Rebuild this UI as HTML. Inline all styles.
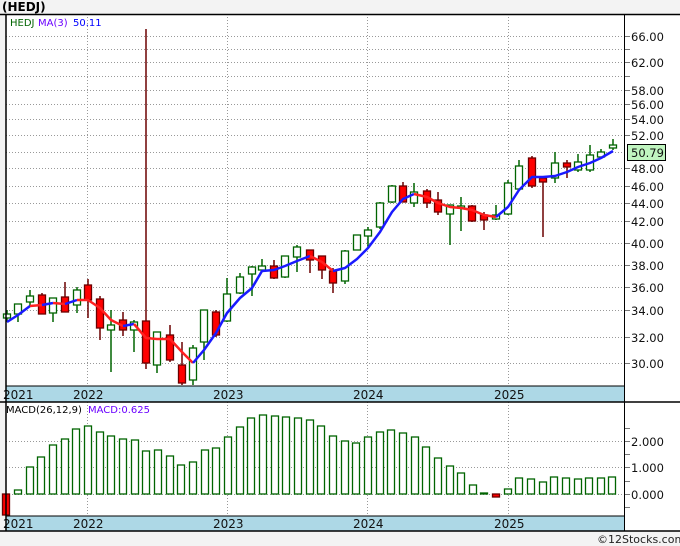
<!DOCTYPE html>
<html><head><meta charset="utf-8"><style>
html,body{margin:0;padding:0;background:#f3f3f3;}
svg{display:block;font-family:"DejaVu Sans","Liberation Sans",sans-serif;}
</style></head><body>
<svg width="680" height="546" viewBox="0 0 680 546" xmlns="http://www.w3.org/2000/svg">
<rect x="0" y="0" width="680" height="546" fill="#f3f3f3"/>
<text x="2" y="11" font-size="12" font-weight="bold" fill="#000">(HEDJ)</text>
<!-- panels -->
<rect x="6" y="14" width="674" height="517" fill="#fff"/>
<g stroke="#999" stroke-width="1" stroke-dasharray="1,2">
<line x1="6" x2="625" y1="36.5" y2="36.5"/><line x1="6" x2="625" y1="49.5" y2="49.5"/><line x1="6" x2="625" y1="62.5" y2="62.5"/><line x1="6" x2="625" y1="76.5" y2="76.5"/><line x1="6" x2="625" y1="90.5" y2="90.5"/><line x1="6" x2="625" y1="104.5" y2="104.5"/><line x1="6" x2="625" y1="119.5" y2="119.5"/><line x1="6" x2="625" y1="135.5" y2="135.5"/><line x1="6" x2="625" y1="152.5" y2="152.5"/><line x1="6" x2="625" y1="168.5" y2="168.5"/><line x1="6" x2="625" y1="186.5" y2="186.5"/><line x1="6" x2="625" y1="203.5" y2="203.5"/><line x1="6" x2="625" y1="221.5" y2="221.5"/><line x1="6" x2="625" y1="243.5" y2="243.5"/><line x1="6" x2="625" y1="265.5" y2="265.5"/><line x1="6" x2="625" y1="287.5" y2="287.5"/><line x1="6" x2="625" y1="310.5" y2="310.5"/><line x1="6" x2="625" y1="337.5" y2="337.5"/><line x1="6" x2="625" y1="363.5" y2="363.5"/>
<line x1="87.5" x2="87.5" y1="14" y2="386"/><line x1="227.5" x2="227.5" y1="14" y2="386"/><line x1="367.5" x2="367.5" y1="14" y2="386"/><line x1="508.5" x2="508.5" y1="14" y2="386"/>
<line x1="6" x2="625" y1="441.5" y2="441.5"/><line x1="6" x2="625" y1="467.5" y2="467.5"/><line x1="6" x2="625" y1="494.5" y2="494.5"/>
<line x1="87.5" x2="87.5" y1="402" y2="516"/><line x1="227.5" x2="227.5" y1="402" y2="516"/><line x1="367.5" x2="367.5" y1="402" y2="516"/><line x1="508.5" x2="508.5" y1="402" y2="516"/>
</g>
<text x="10" y="26" font-size="10" fill="#006400">HEDJ</text>
<text x="38" y="26" font-size="10" fill="#6a00ff">MA(3)</text>
<text x="73" y="26" font-size="10" fill="#0000ff">50.11</text>
<!-- wicks -->
<g stroke-width="1.5">
<g stroke="#006400">
<line x1="7" x2="7" y1="310" y2="322"/><line x1="18" x2="18" y1="304" y2="322"/><line x1="30" x2="30" y1="290" y2="306"/><line x1="53" x2="53" y1="298" y2="322"/><line x1="77" x2="77" y1="287" y2="313"/><line x1="111" x2="111" y1="310" y2="372"/><line x1="134" x2="134" y1="320" y2="352"/><line x1="157" x2="157" y1="332" y2="373"/><line x1="193" x2="193" y1="345" y2="385"/><line x1="204" x2="204" y1="310" y2="360"/><line x1="227" x2="227" y1="278" y2="322"/><line x1="240" x2="240" y1="273" y2="294"/><line x1="252" x2="252" y1="266" y2="296"/><line x1="262" x2="262" y1="259" y2="270"/><line x1="285" x2="285" y1="256" y2="278"/><line x1="297" x2="297" y1="245" y2="272"/><line x1="345" x2="345" y1="250" y2="284"/><line x1="357" x2="357" y1="235" y2="250"/><line x1="368" x2="368" y1="227" y2="248"/><line x1="380" x2="380" y1="202" y2="229"/><line x1="392" x2="392" y1="185" y2="203"/><line x1="414" x2="414" y1="183" y2="207"/><line x1="450" x2="450" y1="205" y2="245"/><line x1="461" x2="461" y1="197" y2="231"/><line x1="496" x2="496" y1="205" y2="220"/><line x1="508" x2="508" y1="180" y2="215"/><line x1="519" x2="519" y1="160" y2="190"/><line x1="555" x2="555" y1="152" y2="183"/><line x1="578" x2="578" y1="154" y2="172"/><line x1="590" x2="590" y1="145" y2="172"/><line x1="601" x2="601" y1="149" y2="158"/><line x1="613" x2="613" y1="139" y2="150"/>
</g>
<g stroke="#6b0000">
<line x1="42" x2="42" y1="293" y2="314"/><line x1="65" x2="65" y1="282" y2="312"/><line x1="88" x2="88" y1="279" y2="318"/><line x1="100" x2="100" y1="296" y2="340"/><line x1="123" x2="123" y1="312" y2="336"/><line x1="146" x2="146" y1="29" y2="369"/><line x1="170" x2="170" y1="325" y2="362"/><line x1="182" x2="182" y1="342" y2="385"/><line x1="216" x2="216" y1="310" y2="337"/><line x1="274" x2="274" y1="260" y2="279"/><line x1="310" x2="310" y1="250" y2="273"/><line x1="322" x2="322" y1="256" y2="279"/><line x1="333" x2="333" y1="268" y2="293"/><line x1="403" x2="403" y1="182" y2="202"/><line x1="427" x2="427" y1="189" y2="208"/><line x1="438" x2="438" y1="192" y2="215"/><line x1="472" x2="472" y1="205" y2="222"/><line x1="484" x2="484" y1="212" y2="230"/><line x1="532" x2="532" y1="156" y2="188"/><line x1="543" x2="543" y1="178" y2="237"/><line x1="567" x2="567" y1="160" y2="178"/>
</g>
</g>
<!-- bodies -->
<g fill="#fff" stroke="#006400" stroke-width="1.3">
<rect x="3.5" y="314" width="7" height="4"/><rect x="14.5" y="304" width="7" height="10"/><rect x="26.5" y="296" width="7" height="6"/><rect x="49.5" y="298" width="7" height="15"/><rect x="73.5" y="290" width="7" height="15"/><rect x="107.5" y="325" width="7" height="5"/><rect x="130.5" y="322" width="7" height="8"/><rect x="153.5" y="332" width="7" height="33"/><rect x="189.5" y="348" width="7" height="32"/><rect x="200.5" y="310" width="7" height="32"/><rect x="223.5" y="294" width="7" height="27"/><rect x="236.5" y="277" width="7" height="16"/><rect x="248.5" y="267" width="7" height="7"/><rect x="258.5" y="266" width="7" height="4"/><rect x="281.5" y="256" width="7" height="21"/><rect x="293.5" y="247" width="7" height="10"/><rect x="341.5" y="251" width="7" height="30"/><rect x="353.5" y="235" width="7" height="15"/><rect x="364.5" y="230" width="7" height="6"/><rect x="376.5" y="203" width="7" height="24"/><rect x="388.5" y="186" width="7" height="16"/><rect x="410.5" y="192" width="7" height="11"/><rect x="446.5" y="205" width="7" height="9"/><rect x="457.5" y="206" width="7" height="2"/><rect x="492.5" y="215" width="7" height="4"/><rect x="504.5" y="183" width="7" height="31"/><rect x="515.5" y="166" width="7" height="23"/><rect x="551.5" y="163" width="7" height="15"/><rect x="574.5" y="162" width="7" height="8"/><rect x="586.5" y="155" width="7" height="15"/><rect x="597.5" y="152" width="7" height="5"/><rect x="609.5" y="145" width="7" height="3"/>
</g>
<g fill="#ff0000" stroke="#6b0000" stroke-width="1.3">
<rect x="38.5" y="295" width="7" height="19"/><rect x="61.5" y="297" width="7" height="15"/><rect x="84.5" y="285" width="7" height="15"/><rect x="96.5" y="299" width="7" height="29"/><rect x="119.5" y="320" width="7" height="10"/><rect x="142.5" y="321" width="7" height="42"/><rect x="166.5" y="335" width="7" height="25"/><rect x="178.5" y="365" width="7" height="18"/><rect x="212.5" y="312" width="7" height="23"/><rect x="270.5" y="266" width="7" height="12"/><rect x="306.5" y="250" width="7" height="10"/><rect x="318.5" y="256" width="7" height="14"/><rect x="329.5" y="271" width="7" height="12"/><rect x="399.5" y="186" width="7" height="16"/><rect x="423.5" y="191" width="7" height="12"/><rect x="434.5" y="200" width="7" height="12"/><rect x="468.5" y="206" width="7" height="15"/><rect x="480.5" y="215" width="7" height="5"/><rect x="528.5" y="158" width="7" height="28"/><rect x="539.5" y="178" width="7" height="4"/><rect x="563.5" y="163" width="7" height="4"/>
</g>
<!-- MA line -->
<g fill="none" stroke-width="2.5" stroke-linejoin="round">
<polyline stroke="#1a1aff" points="7,322 18,315 30,306"/>
<polyline stroke="#ff2020" points="30,306 42,305"/>
<polyline stroke="#1a1aff" points="42,305 53,303"/>
<polyline stroke="#ff2020" points="53,303 65,304"/>
<polyline stroke="#1a1aff" points="65,304 77,300"/>
<polyline stroke="#ff2020" points="77,300 88,300 100,308 111,320 123,326"/>
<polyline stroke="#1a1aff" points="123,326 134,324"/>
<polyline stroke="#ff2020" points="134,324 146,338 157,339 170,339 182,352 193,363"/>
<polyline stroke="#1a1aff" points="193,363 204,350 216,333 227,313 240,298 252,288 262,271 274,270 285,266 297,261 310,256"/>
<polyline stroke="#ff2020" points="310,256 322,262 333,271"/>
<polyline stroke="#1a1aff" points="333,271 345,268 357,259 368,248 380,232 392,212 403,199 414,194"/>
<polyline stroke="#ff2020" points="414,194 427,197 438,203 450,207 461,208 472,210 484,215 496,217"/>
<polyline stroke="#1a1aff" points="496,217 508,207 519,190 532,177 543,177 555,176 567,172 578,167 590,163 601,158 613,151"/>
</g>
<!-- date band -->
<rect x="6" y="386" width="619" height="16" fill="#add8e6"/>
<line x1="6" x2="625" y1="386" y2="386" stroke="#000"/>
<line x1="0" x2="680" y1="402" y2="402" stroke="#000" stroke-width="1.5"/>
<g font-size="12" fill="#111">
<text x="3" y="399">2021</text><text x="73" y="399">2022</text><text x="213" y="399">2023</text><text x="353" y="399">2024</text><text x="494" y="399">2025</text>
</g>
<!-- MACD -->
<text x="6" y="413" font-size="10" fill="#000">MACD(26,12,9)</text>
<text x="88" y="413" font-size="10" fill="#6a00ff">MACD:0.625</text>
<g fill="#fff" stroke="#006400" stroke-width="1.3">
<rect x="14.5" y="490" width="7" height="4"/><rect x="26.5" y="467" width="7" height="27"/><rect x="37.5" y="457" width="7" height="37"/><rect x="49.5" y="445" width="7" height="49"/><rect x="61.5" y="439" width="7" height="55"/><rect x="72.5" y="429" width="7" height="65"/><rect x="84.5" y="426" width="7" height="68"/><rect x="96.5" y="432" width="7" height="62"/><rect x="107.5" y="436" width="7" height="58"/><rect x="119.5" y="439" width="7" height="55"/><rect x="131.5" y="440" width="7" height="54"/><rect x="142.5" y="451" width="7" height="43"/><rect x="154.5" y="450" width="7" height="44"/><rect x="166.5" y="456" width="7" height="38"/><rect x="177.5" y="465" width="7" height="29"/><rect x="189.5" y="462" width="7" height="32"/><rect x="201.5" y="450" width="7" height="44"/><rect x="212.5" y="448" width="7" height="46"/><rect x="224.5" y="437" width="7" height="57"/><rect x="236.5" y="427" width="7" height="67"/><rect x="247.5" y="418" width="7" height="76"/><rect x="259.5" y="415" width="7" height="79"/><rect x="271.5" y="416" width="7" height="78"/><rect x="282.5" y="417" width="7" height="77"/><rect x="294.5" y="418" width="7" height="76"/><rect x="306.5" y="420" width="7" height="74"/><rect x="317.5" y="426" width="7" height="68"/><rect x="329.5" y="436" width="7" height="58"/><rect x="341.5" y="441" width="7" height="53"/><rect x="352.5" y="443" width="7" height="51"/><rect x="364.5" y="437" width="7" height="57"/><rect x="376.5" y="432" width="7" height="62"/><rect x="387.5" y="430" width="7" height="64"/><rect x="399.5" y="433" width="7" height="61"/><rect x="411.5" y="437" width="7" height="57"/><rect x="422.5" y="447" width="7" height="47"/><rect x="434.5" y="458" width="7" height="36"/><rect x="446.5" y="466" width="7" height="28"/><rect x="457.5" y="473" width="7" height="21"/><rect x="469.5" y="485" width="7" height="9"/><rect x="480.5" y="493" width="7" height="1"/><rect x="504.5" y="489" width="7" height="5"/><rect x="515.5" y="478" width="7" height="16"/><rect x="527.5" y="479" width="7" height="15"/><rect x="539.5" y="482" width="7" height="12"/><rect x="550.5" y="477" width="7" height="17"/><rect x="562.5" y="478" width="7" height="16"/><rect x="574.5" y="479" width="7" height="15"/><rect x="585.5" y="478" width="7" height="16"/><rect x="597.5" y="478" width="7" height="16"/><rect x="608.5" y="477" width="7" height="17"/>
</g>
<g fill="#ff0000" stroke="#6b0000" stroke-width="1.3">
<rect x="2.5" y="494" width="7" height="21"/><rect x="492.5" y="494" width="7" height="3"/>
</g>
<rect x="6" y="516" width="619" height="15" fill="#add8e6"/>
<line x1="6" x2="625" y1="516" y2="516" stroke="#000"/>
<line x1="0" x2="680" y1="531" y2="531" stroke="#000" stroke-width="1.5"/>
<g font-size="12" fill="#111">
<text x="3" y="528">2021</text><text x="73" y="528">2022</text><text x="213" y="528">2023</text><text x="353" y="528">2024</text><text x="494" y="528">2025</text>
</g>
<!-- frames -->
<line x1="0" x2="680" y1="14.5" y2="14.5" stroke="#000" stroke-width="1.5"/>
<line x1="6" x2="6" y1="14" y2="531" stroke="#000" stroke-width="1.5"/>
<line x1="624.5" x2="624.5" y1="14" y2="531" stroke="#000"/>
<!-- right axis ticks & labels -->
<g stroke="#777">
<line x1="625" x2="630" y1="36.5" y2="36.5"/><line x1="625" x2="630" y1="49.5" y2="49.5"/><line x1="625" x2="630" y1="62.5" y2="62.5"/><line x1="625" x2="630" y1="76.5" y2="76.5"/><line x1="625" x2="630" y1="90.5" y2="90.5"/><line x1="625" x2="630" y1="104.5" y2="104.5"/><line x1="625" x2="630" y1="119.5" y2="119.5"/><line x1="625" x2="630" y1="135.5" y2="135.5"/><line x1="625" x2="630" y1="168.5" y2="168.5"/><line x1="625" x2="630" y1="186.5" y2="186.5"/><line x1="625" x2="630" y1="203.5" y2="203.5"/><line x1="625" x2="630" y1="221.5" y2="221.5"/><line x1="625" x2="630" y1="243.5" y2="243.5"/><line x1="625" x2="630" y1="265.5" y2="265.5"/><line x1="625" x2="630" y1="287.5" y2="287.5"/><line x1="625" x2="630" y1="310.5" y2="310.5"/><line x1="625" x2="630" y1="337.5" y2="337.5"/><line x1="625" x2="630" y1="363.5" y2="363.5"/>
<line x1="625" x2="630" y1="428.5" y2="428.5"/><line x1="625" x2="630" y1="441.5" y2="441.5"/><line x1="625" x2="630" y1="454.5" y2="454.5"/><line x1="625" x2="630" y1="467.5" y2="467.5"/><line x1="625" x2="630" y1="481.5" y2="481.5"/><line x1="625" x2="630" y1="494.5" y2="494.5"/><line x1="625" x2="630" y1="507.5" y2="507.5"/>
</g>
<g font-size="11.5" fill="#111">
<text x="631" y="41">66.00</text><text x="631" y="67">62.00</text><text x="631" y="95">58.00</text><text x="631" y="109">56.00</text><text x="631" y="124">54.00</text><text x="631" y="140">52.00</text><text x="631" y="173">48.00</text><text x="631" y="191">46.00</text><text x="631" y="208">44.00</text><text x="631" y="226">42.00</text><text x="631" y="248">40.00</text><text x="631" y="270">38.00</text><text x="631" y="292">36.00</text><text x="631" y="315">34.00</text><text x="631" y="342">32.00</text><text x="631" y="368">30.00</text>
<text x="631" y="446">2.000</text><text x="631" y="472">1.000</text><text x="631" y="499">0.000</text>
</g>
<rect x="627.5" y="144.5" width="38" height="16" fill="#c0f5c0" stroke="#000"/>
<text x="631" y="157" font-size="11.5" fill="#111">50.79</text>
<text x="597" y="543" font-size="11" fill="#222">©12Stocks.com</text>
</svg>
</body></html>
